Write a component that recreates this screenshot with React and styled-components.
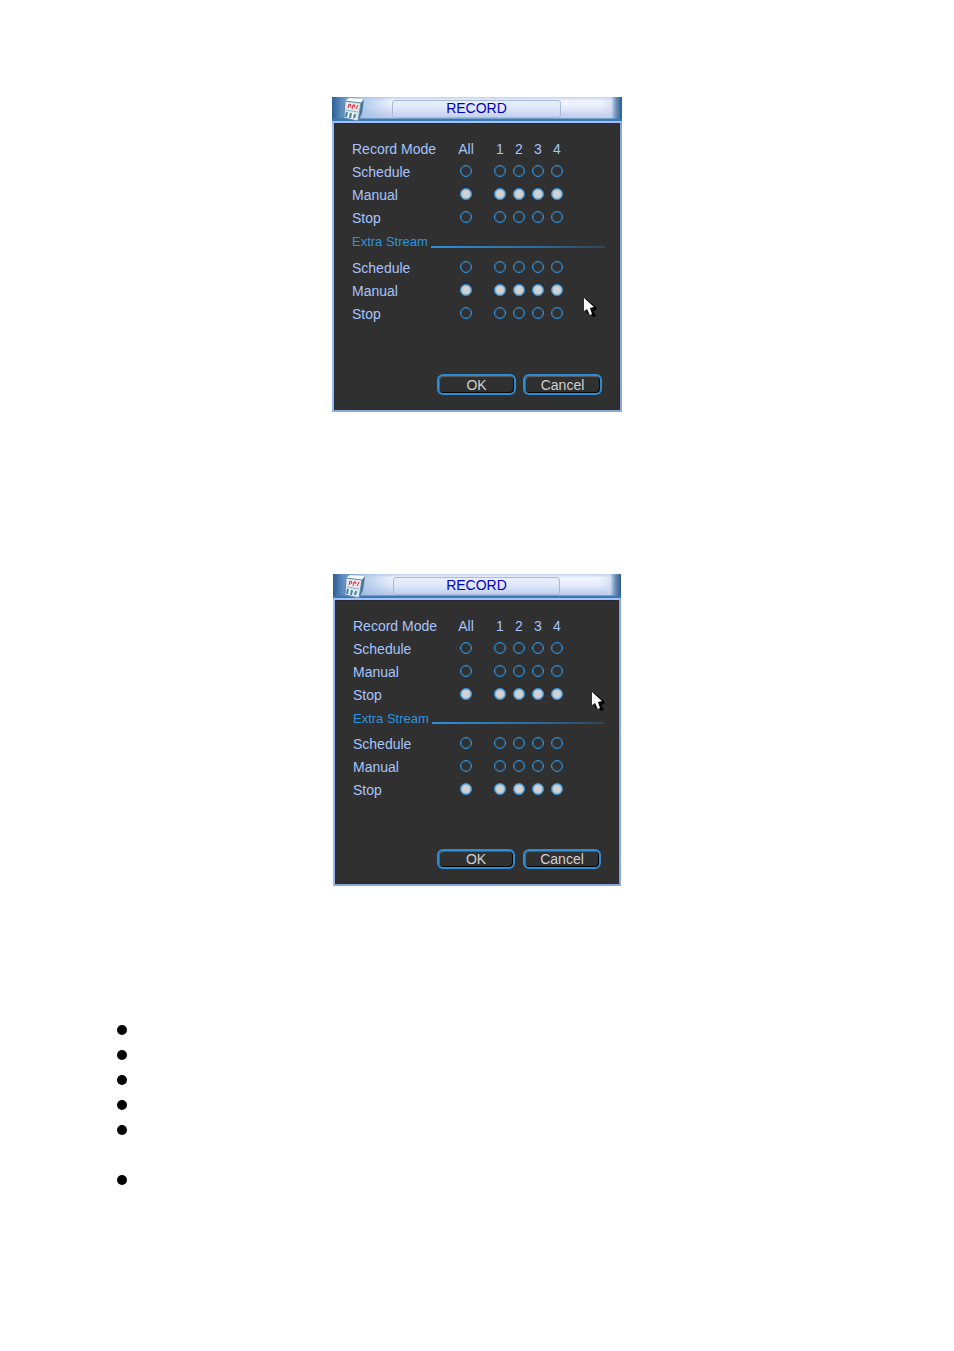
import React, { useState } from "react";
import styled, { createGlobalStyle } from "styled-components";

const GlobalStyle = createGlobalStyle`
  * {
    box-sizing: border-box;
  }
  body {
    margin: 0;
    background: #ffffff;
    font-family: "Liberation Sans", Arial, sans-serif;
    font-size: 14px;
  }
`;

const Page = styled.main`
  display: flex;
  flex-direction: column;
  align-items: center;
  padding: 97px 16px 160px;
`;

const Dialog = styled.section`
  position: relative;
  width: ${(props) => (props.$compact ? "288px" : "290px")};
  max-width: 100%;
  margin-bottom: ${(props) => (props.$compact ? "131px" : "162px")};
`;

const TitleBar = styled.header`
  display: grid;
  grid-template-columns: 60px 1fr 61px;
  height: 24px;
  padding: 3px 0;
  background:
    linear-gradient(180deg, transparent 21px, #3a78b0 22px),
    linear-gradient(90deg, #2c5f94 0, #5f8dc0 10px, rgba(160, 190, 228, 0.7) 32px, rgba(190, 210, 240, 0) 62px),
    linear-gradient(270deg, #2c5c8e 0, #6f93bd 6px, rgba(200, 214, 238, 0.5) 11px, rgba(255, 255, 255, 0) 22px),
    linear-gradient(180deg, #c3d2f0 0, #f3f6ff 4px, #e4ebfb 11px, #b9c9e8 21px);
`;

const PanelIcon = styled.svg`
  width: 24px;
  height: 24px;
  margin: -3px 0 0 9px;
`;

const Title = styled.h2`
  margin: 0;
  height: 18px;
  border: 1px solid #a9b9dc;
  border-radius: 3px;
  background: linear-gradient(180deg, #e9effc, #dde6f9 50%, #c2d1ef);
  color: #0000c4;
  font-size: 14px;
  font-weight: 400;
  line-height: 15px;
  text-align: center;
`;

const Body = styled.form`
  padding: 15px 16px 15px 17px;
  border: 2px solid #9cb8f4;
  border-top-color: #a3c0fa;
  border-right-color: #8ba6dc;
  border-bottom-color: #8ba6dc;
  background: #303030;
  box-shadow: inset 0 0 0 1px #2a2c34;
`;

const Row = styled.div`
  display: grid;
  grid-template-columns: 1fr 34px 19px 19px 19px 12px;
  height: 23px;
  padding-right: ${(props) => (props.$compact ? "40px" : "41px")};
  padding-left: 1px;
  color: #a6c4fc;
  line-height: 23px;
`;

const ColumnName = styled.span`
  display: flex;
  justify-content: center;
  width: 12px;
`;

const Radio = styled.input`
  appearance: none;
  width: 12px;
  height: 12px;
  margin: 4px 0 0;
  border: 1px solid #2f93dc;
  border-radius: 50%;
  background: transparent;
  box-shadow: inset 0 0 0 1px rgba(47, 147, 220, 0.35);

  &:checked {
    background: #d2d2d2;
    box-shadow: inset 0 0 0 1px rgba(47, 147, 220, 0.5);
  }
`;

const Section = styled.div`
  display: flex;
  height: 23px;
  margin: 0 -1px ${(props) => (props.$compact ? "3px" : "4px")} 1px;
  color: #2f93dc;
  font-size: 13px;
  line-height: 23px;

  &::after {
    content: "";
    flex: 1;
    height: 2px;
    margin: ${(props) => (props.$compact ? "15px" : "16px")} 0 0 3px;
    background: linear-gradient(90deg, #2f8fd8, #2b6da0 60%, #2f4658);
  }
`;

const Actions = styled.div`
  display: flex;
  justify-content: flex-end;
  gap: ${(props) => (props.$compact ? "8px" : "7px")};
  margin-top: ${(props) => (props.$compact ? "47px" : "48px")};
  padding-right: 2px;
`;

const Button = styled.button`
  width: ${(props) => (props.$compact ? "78px" : "79px")};
  height: ${(props) => (props.$compact ? "20px" : "21px")};
  padding: 0;
  border: 2px solid #2c8cd4;
  border-radius: 6px;
  background: #303030;
  box-shadow: inset 1px 1px 0 #5c5c5c, inset -1px -1px 0 #080808;
  color: #d0d0d0;
  font: 14px/16px "Liberation Sans", Arial, sans-serif;
`;

const Pointer = styled.svg`
  position: absolute;
  top: ${(props) => props.$top}px;
  left: ${(props) => props.$left}px;
  width: 14px;
  height: 20px;
`;

const Bullets = styled.ul`
  align-self: stretch;
  margin: 0 100px;
  padding: 0;
  list-style: none;
`;

const Bullet = styled.li`
  height: ${(props) => (props.$lines || 1) * 25}px;
  padding: 8px 0 0 1px;

  &::before {
    content: "";
    display: block;
    width: 10px;
    height: 10px;
    border-radius: 50%;
    background: #000000;
  }
`;

const columns = ["All", "1", "2", "3", "4"];
const modes = ["Schedule", "Manual", "Stop"];

function ModeRows({ id, initial, compact }) {
  const [picked, setPicked] = useState(columns.map(() => initial));

  const pick = (index, mode) => {
    // "All" moves every channel at once
    setPicked(picked.map((old, i) => (index === 0 || i === index ? mode : old)));
  };

  return modes.map((mode) => (
    <Row key={mode} $compact={compact}>
      <label htmlFor={`${id}-${mode}-All`}>{mode}</label>
      {columns.map((column, index) => (
        <Radio
          key={column}
          type="radio"
          id={`${id}-${mode}-${column}`}
          name={`${id}-${column}`}
          aria-label={`${mode} ${column}`}
          checked={picked[index] === mode}
          onChange={() => pick(index, mode)}
        />
      ))}
    </Row>
  ));
}

function RecordDialog({ id, mode, compact, pointer }) {
  return (
    <Dialog $compact={compact} aria-labelledby={`${id}-title`}>
      <TitleBar>
        <PanelIcon viewBox="0 0 24 24" aria-hidden="true">
          <path d="M4 4l4-3 15 1-3 4z" fill="#f6fafd" />
          <path d="M20 6l3-4-2 14-4 8z" fill="#3f7294" />
          <path d="M4 4l16 2-3 18-14-3z" fill="#dbe8f1" stroke="#6288a6" />
          <path d="M6 6l12 1-1 6-12-1z" fill="#f6e6ea" />
          <path d="M7 11l1-4 2 1-1 2M11 12l1-4h2l-1 2M15 12l2-4" stroke="#e0202c" fill="none" />
          <path d="M5 13l12 2" stroke="#8fb0c8" />
          <path d="M6 15l-1 5M10 16l-1 5M14 17l-1 4" stroke="#4a7fa6" strokeWidth="2" />
          <path d="M8 15l-1 5M12 16l-1 5" stroke="#ffffff" />
        </PanelIcon>
        <Title id={`${id}-title`}>RECORD</Title>
      </TitleBar>
      <Body onSubmit={(e) => e.preventDefault()}>
        <Row $compact={compact}>
          <span>Record Mode</span>
          {columns.map((column) => (
            <ColumnName key={column}>{column}</ColumnName>
          ))}
        </Row>
        <ModeRows id={`${id}-main`} initial={mode} compact={compact} />
        <Section $compact={compact}>Extra Stream</Section>
        <ModeRows id={`${id}-extra`} initial={mode} compact={compact} />
        <Actions $compact={compact}>
          <Button type="submit" $compact={compact}>OK</Button>
          <Button type="button" $compact={compact}>Cancel</Button>
        </Actions>
      </Body>
      <Pointer $left={pointer.x} $top={pointer.y} viewBox="0 0 14 20" aria-hidden="true">
        <path d="M1 0l12 10-1 2-3 1 3 5-3 1-4-5-2 2z" fill="#000000" />
        <path d="M0 0v13l3-2 3 6 2-1-2-6 4-1z" fill="#ffffff" />
      </Pointer>
    </Dialog>
  );
}

function App() {
  return (
    <>
      <GlobalStyle />
      <Page>
        <RecordDialog id="manual" mode="Manual" pointer={{ x: 252, y: 201 }} />
        <RecordDialog id="stop" mode="Stop" compact pointer={{ x: 259, y: 118 }} />
        <Bullets>
          <Bullet />
          <Bullet />
          <Bullet />
          <Bullet />
          <Bullet $lines={2} />
          <Bullet />
        </Bullets>
      </Page>
    </>
  );
}

export default App;
